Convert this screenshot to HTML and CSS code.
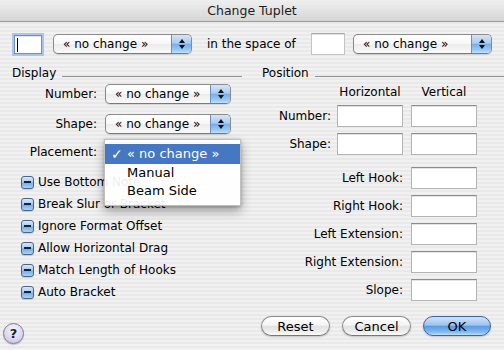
FILE: index.html
```html
<!DOCTYPE html>
<html>
<head>
<meta charset="utf-8">
<title>Change Tuplet</title>
<link rel="stylesheet" href="styles.css">
</head>
<body>
<div class="window">
  <div class="titlebar">Change Tuplet</div>

  <div class="top-row">
    <div class="field focus"><span class="caret"></span></div>
    <div class="popup wide"><span class="popup-label">« no change »</span><span class="arrows"></span></div>
    <span class="space-label">in the space of</span>
    <div class="field small"></div>
    <div class="popup wide"><span class="popup-label">« no change »</span><span class="arrows"></span></div>
  </div>

  <div class="columns">
    <section class="group">
      <div class="group-head"><span>Display</span><span class="rule"></span></div>
      <div class="display-form">
        <span class="row-label">Number:</span>
        <div class="popup"><span class="popup-label">« no change »</span><span class="arrows"></span></div>
        <span class="row-label">Shape:</span>
        <div class="popup"><span class="popup-label">« no change »</span><span class="arrows"></span></div>
        <span class="row-label">Placement:</span>
        <div class="popup anchor">
          <span class="popup-label covered"></span><span class="arrows"></span>
          <div class="menu">
            <div class="menu-item selected"><span class="check">✓</span>« no change »</div>
            <div class="menu-item">Manual</div>
            <div class="menu-item">Beam Side</div>
          </div>
        </div>
      </div>
      <ul class="checks">
        <li><span class="box"></span>Use Bottom Note</li>
        <li><span class="box"></span>Break Slur or Bracket</li>
        <li><span class="box"></span>Ignore Format Offset</li>
        <li><span class="box"></span>Allow Horizontal Drag</li>
        <li><span class="box"></span>Match Length of Hooks</li>
        <li><span class="box"></span>Auto Bracket</li>
      </ul>
    </section>

    <section class="group">
      <div class="group-head"><span>Position</span><span class="rule"></span></div>
      <div class="position-form">
        <span></span><span class="col-head">Horizontal</span><span class="col-head">Vertical</span>
        <span class="row-label">Number:</span><div class="field"></div><div class="field"></div>
        <span class="row-label">Shape:</span><div class="field"></div><div class="field"></div>
        <span class="spacer"></span>
        <span class="row-label wide-label">Left Hook:</span><div class="field"></div>
        <span class="row-label wide-label">Right Hook:</span><div class="field"></div>
        <span class="row-label wide-label">Left Extension:</span><div class="field"></div>
        <span class="row-label wide-label">Right Extension:</span><div class="field"></div>
        <span class="row-label wide-label">Slope:</span><div class="field"></div>
      </div>
    </section>
  </div>

  <div class="footer">
    <div class="help">?</div>
    <div class="buttons">
      <div class="button">Reset</div>
      <div class="button">Cancel</div>
      <div class="button default">OK</div>
    </div>
  </div>
</div>
</body>
</html>
```

FILE: styles.css
```css
* { box-sizing: border-box; }

html, body {
  margin: 0;
  padding: 0;
}

body {
  font-family: "DejaVu Sans", "Liberation Sans", sans-serif;
  font-size: 12px;
  color: #000;
}

.window {
  width: 504px;
  height: 350px;
  display: flex;
  flex-direction: column;
  background: repeating-linear-gradient(to bottom, #f1f1f1 0px, #f1f1f1 2px, #e9e9e9 2px, #e9e9e9 4px);
  overflow: hidden;
}

.titlebar {
  height: 22px;
  flex: none;
  display: flex;
  align-items: center;
  justify-content: center;
  font-size: 12.5px;
  color: #1c1c1c;
  background: linear-gradient(#efefef, #d6d6d6);
  border-bottom: 1px solid #9a9a9a;
  padding-bottom: 1px;
}

/* ---------- top row ---------- */
.top-row {
  display: flex;
  align-items: center;
  height: 20px;
  margin-top: 12px;
  flex: none;
}

.field {
  height: 22px;
  width: 66px;
  background: #fff;
  border: 1px solid #b4b4b4;
  border-top-color: #8c8c8c;
  box-shadow: inset 0 1px 0 #e4e4e4;
}

.field.focus {
  width: 28px;
  height: 19px;
  margin-left: 14px;
  border: 1px solid #6f8fc4;
  box-shadow: 0 0 0 2px #a9c5ec, inset 0 1px 0 #e4e4e4;
  position: relative;
}

.caret {
  display: block;
  width: 1px;
  height: 14px;
  background: #000;
  margin: 2px 0 0 2px;
}

.field.small {
  width: 34px;
  height: 22px;
  border-color: #c4c4c4;
  border-top-color: #a8a8a8;
}

.popup {
  position: relative;
  display: flex;
  align-items: stretch;
  height: 20px;
  width: 126px;
  border: 1px solid #8a8a8a;
  border-bottom-color: #7a7a7a;
  border-radius: 5px;
  background: linear-gradient(#ffffff 0%, #f7f7f7 50%, #ececec 51%, #f9f9f9 100%);
  box-shadow: 0 1px 1px rgba(0, 0, 0, 0.12);
}

.popup.wide {
  width: 139px;
}

.top-row .popup.wide:nth-child(2) { margin-left: 11px; }

.popup-label {
  flex: 1;
  padding-left: 9px;
  line-height: 18px;
  white-space: nowrap;
}

.arrows {
  position: relative;
  width: 20px;
  border-left: 1px solid #6f8fc0;
  border-radius: 0 4px 4px 0;
  background: linear-gradient(#d4e5f8 0%, #a9cbf0 45%, #7aaee9 52%, #9ccbf5 85%, #c3e2fb 100%);
}

.arrows::before,
.arrows::after {
  content: "";
  position: absolute;
  left: 7px;
  border-left: 3px solid transparent;
  border-right: 3px solid transparent;
}

.arrows::before {
  top: 4px;
  border-bottom: 4px solid #111;
}

.arrows::after {
  top: 10px;
  border-top: 4px solid #111;
}

.space-label {
  margin-left: 15px;
  width: 104px;
  white-space: nowrap;
}

.top-row .field.small + .popup { margin-left: 8px; }

/* ---------- columns ---------- */
.columns {
  display: grid;
  grid-template-columns: 250px 254px;
  margin-top: 11px;
  flex: none;
}

.group-head {
  display: flex;
  align-items: center;
  height: 16px;
  padding-left: 12px;
}

.rule {
  flex: 1;
  height: 1px;
  margin-top: 6px;
  margin-left: 6px;
  background: #939393;
}

.group:first-child .rule {
  margin-right: 8px;
}

.display-form {
  display: grid;
  grid-template-columns: 97px 126px;
  grid-template-rows: 30px 28px 20px;
  column-gap: 8px;
  margin-top: 3px;
  align-items: start;
}

.row-label {
  text-align: right;
  line-height: 20px;
  white-space: nowrap;
}

/* menu over the placement popup */
.menu {
  position: absolute;
  left: -2px;
  top: -4px;
  width: 137px;
  padding: 4px 0 5px;
  background: rgba(255, 255, 255, 0.93);
  border: 1px solid rgba(150, 150, 150, 0.6);
  box-shadow: 0 5px 10px rgba(0, 0, 0, 0.35), 0 1px 3px rgba(0, 0, 0, 0.2);
  font-size: 13px;
  z-index: 5;
}

.menu-item {
  position: relative;
  height: 18px;
  line-height: 18px;
  padding-left: 22px;
  white-space: nowrap;
}

.menu-item.selected {
  height: 20px;
  line-height: 20px;
  background: #4577c2;
  color: #fff;
}

.check {
  position: absolute;
  left: 6px;
  top: 0;
  font-size: 14px;
}

.checks {
  list-style: none;
  margin: 9px 0 0;
  padding: 0 0 0 21px;
}

.checks li {
  display: flex;
  align-items: center;
  height: 22px;
  white-space: nowrap;
}

.box {
  position: relative;
  width: 13px;
  height: 13px;
  margin-right: 4px;
  border: 1px solid #4d6585;
  border-radius: 3px;
  background: linear-gradient(#d7e8fa 0%, #a7cbf1 45%, #79ade9 55%, #a6d3f7 100%);
  box-shadow: 0 1px 1px rgba(0, 0, 0, 0.15);
}

.box::after {
  content: "";
  position: absolute;
  left: 2px;
  top: 4px;
  width: 7px;
  height: 2px;
  background: #14233a;
}

/* ---------- position ---------- */
.position-form {
  display: grid;
  grid-template-columns: 75px 74px 66px;
  grid-template-rows: 20px 28px 28px 6px 28px 28px 28px 28px 28px;
  align-items: center;
  margin-top: 1px;
  padding-left: 12px;
}

.position-form .row-label {
  padding-right: 6px;
}

.position-form .wide-label {
  grid-column: 1 / span 2;
  padding-right: 8px;
}

.position-form .field {
  width: 66px;
}

.col-head {
  width: 66px;
  text-align: center;
  white-space: nowrap;
}

.spacer {
  grid-column: 1 / -1;
}

/* ---------- footer ---------- */
.footer {
  margin-top: auto;
  height: 34px;
  display: flex;
  justify-content: space-between;
  align-items: flex-start;
  padding: 0 13px 0 3px;
  flex: none;
}

.help {
  width: 21px;
  height: 21px;
  margin-top: 7px;
  border-radius: 50%;
  border: 1px solid #7d7a92;
  background: radial-gradient(circle at 50% 30%, #f6f4fc 0%, #ddd8f1 55%, #c4bde4 100%);
  box-shadow: 0 1px 1px rgba(0, 0, 0, 0.2);
  display: flex;
  align-items: center;
  justify-content: center;
  font-weight: bold;
  font-size: 13px;
  color: #222;
}

.buttons {
  display: flex;
  gap: 12px;
}

.button {
  width: 69px;
  height: 20px;
  border-radius: 10px;
  border: 1px solid #8a8a8a;
  border-bottom-color: #777;
  background: linear-gradient(#ffffff 0%, #f4f4f4 45%, #e2e2e2 52%, #f0f0f0 85%, #fbfbfb 100%);
  box-shadow: 0 1px 2px rgba(0, 0, 0, 0.2);
  display: flex;
  align-items: center;
  justify-content: center;
  font-size: 13px;
}

.button.default {
  width: 68px;
  border-color: #3f64a0;
  background: linear-gradient(#cfe3f9 0%, #9ec4f0 45%, #5c9ae4 52%, #83bdf2 85%, #bfe1fd 100%);
}
```
